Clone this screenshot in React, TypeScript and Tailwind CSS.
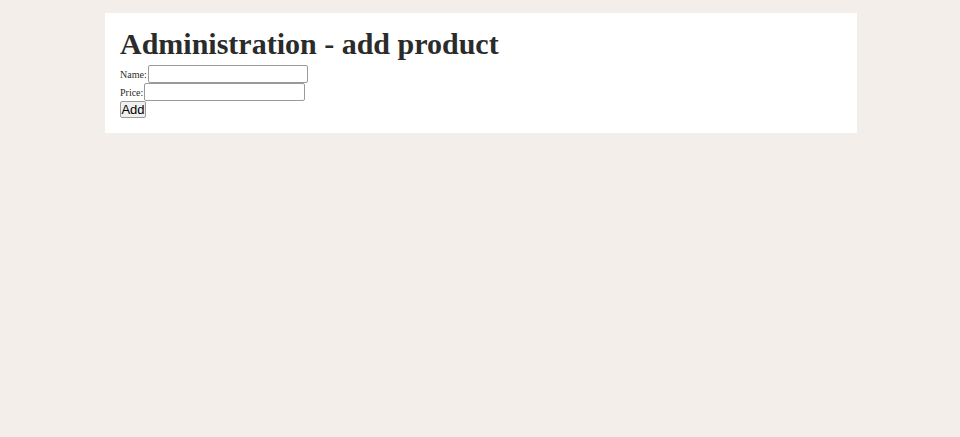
import React from 'react';

const App: React.FC = () => {
  return (
    <div className="min-h-[437px] bg-[#f3eeea] pt-[13px]">
      <div className="ml-[105px] w-[752px] bg-white pr-4 pl-[15px] pt-[12px] pb-[15px] text-[#2b2b2b] font-['Liberation_Serif',serif]">
        <h1 className="text-[30px] font-bold leading-[37px]">Administration - add product</h1>
        <form className="mt-[3px] text-[10px]" onSubmit={(e) => e.preventDefault()}>
          <div className="flex h-[18px] items-center">
            <label htmlFor="name" className="mr-px">Name:</label>
            <input
              id="name"
              type="text"
              className="h-[18px] w-[160px] rounded-[2px] border border-[#9a9a9a] bg-white px-0.5 text-[13px] outline-none"
            />
          </div>
          <div className="flex h-[18px] items-center">
            <label htmlFor="price" className="mr-px">Price:</label>
            <input
              id="price"
              type="text"
              className="h-[18px] w-[161px] rounded-[2px] border border-[#9a9a9a] bg-white px-0.5 text-[13px] outline-none"
            />
          </div>
          <button
            type="submit"
            className="flex h-[17px] w-[26px] items-center justify-center rounded-[2px] border border-[#9a9a9a] bg-[#efefef] text-[13px] leading-none text-black font-['Liberation_Sans',sans-serif]"
          >
            Add
          </button>
        </form>
      </div>
    </div>
  );
};

export default App;
